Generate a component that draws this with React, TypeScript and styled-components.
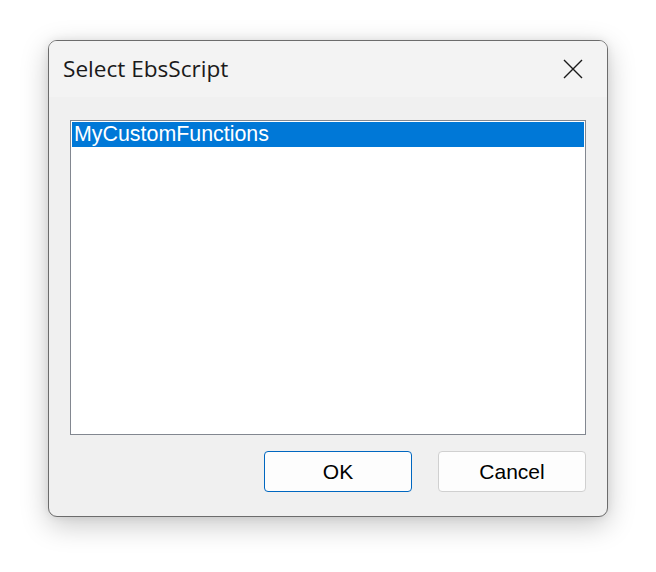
import React from "react";
import styled, { createGlobalStyle } from "styled-components";

const Global = createGlobalStyle`
  html, body { margin: 0; padding: 0; background: #ffffff; }
  body { width: 656px; height: 572px; overflow: hidden; }
`;

const Page = styled.div`
  padding: 40px 0 0 48px;
`;

const Dialog = styled.div`
  width: 558px;
  height: 475px;
  border: 1px solid #6c6c6c;
  border-radius: 9px;
  background: #f0f0f0;
  box-shadow: 0 8px 28px rgba(0, 0, 0, 0.22), 0 0 8px rgba(0, 0, 0, 0.08);
  display: flex;
  flex-direction: column;
  overflow: hidden;
`;

const TitleBar = styled.div`
  height: 56px;
  flex: none;
  background: #f3f3f3;
  display: flex;
  align-items: center;
  justify-content: space-between;
  padding: 0 0 0 14px;
`;

const Title = styled.div`
  font-family: "Open Sans", "Noto Sans", sans-serif;
  font-size: 22.6px;
  color: #1a1a1a;
  margin-top: -1px;
`;

const CloseButton = styled.div`
  width: 66px;
  height: 56px;
  display: flex;
  align-items: center;
  justify-content: center;
  margin-right: 1px;
`;

const Body = styled.div`
  flex: 1;
  display: flex;
  flex-direction: column;
  padding: 23px 21px 24px 21px;
  gap: 16px;
`;

const ListBox = styled.div`
  height: 311px;
  border: 1px solid #828790;
  background: #ffffff;
  padding: 1px;
`;

const Item = styled.div<{ $selected?: boolean }>`
  height: 25px;
  line-height: 25px;
  padding-left: 2px;
  font-family: "Liberation Sans", Arial, sans-serif;
  font-size: 21.4px;
  color: ${(p) => (p.$selected ? "#ffffff" : "#000000")};
  background: ${(p) => (p.$selected ? "#0078d7" : "transparent")};
`;

const ButtonRow = styled.div`
  display: flex;
  justify-content: flex-end;
  gap: 26px;
`;

const Button = styled.div<{ $default?: boolean }>`
  width: 146px;
  height: 39px;
  border: 1px solid ${(p) => (p.$default ? "#0067c0" : "#d0d0d0")};
  border-radius: 4px;
  background: #fdfdfd;
  display: flex;
  align-items: center;
  justify-content: center;
  font-family: "Liberation Sans", Arial, sans-serif;
  font-size: 21px;
  color: #000000;
`;

export default function App() {
  return (
    <>
      <Global />
      <Page>
        <Dialog>
          <TitleBar>
            <Title>Select EbsScript</Title>
            <CloseButton>
              <svg width="20" height="20" viewBox="0 0 20 20">
                <path d="M1 1 L19 19 M19 1 L1 19" stroke="#1a1a1a" strokeWidth="1.4" fill="none" />
              </svg>
            </CloseButton>
          </TitleBar>
          <Body>
            <ListBox>
              <Item $selected>MyCustomFunctions</Item>
            </ListBox>
            <ButtonRow>
              <Button $default>OK</Button>
              <Button>Cancel</Button>
            </ButtonRow>
          </Body>
        </Dialog>
      </Page>
    </>
  );
}
